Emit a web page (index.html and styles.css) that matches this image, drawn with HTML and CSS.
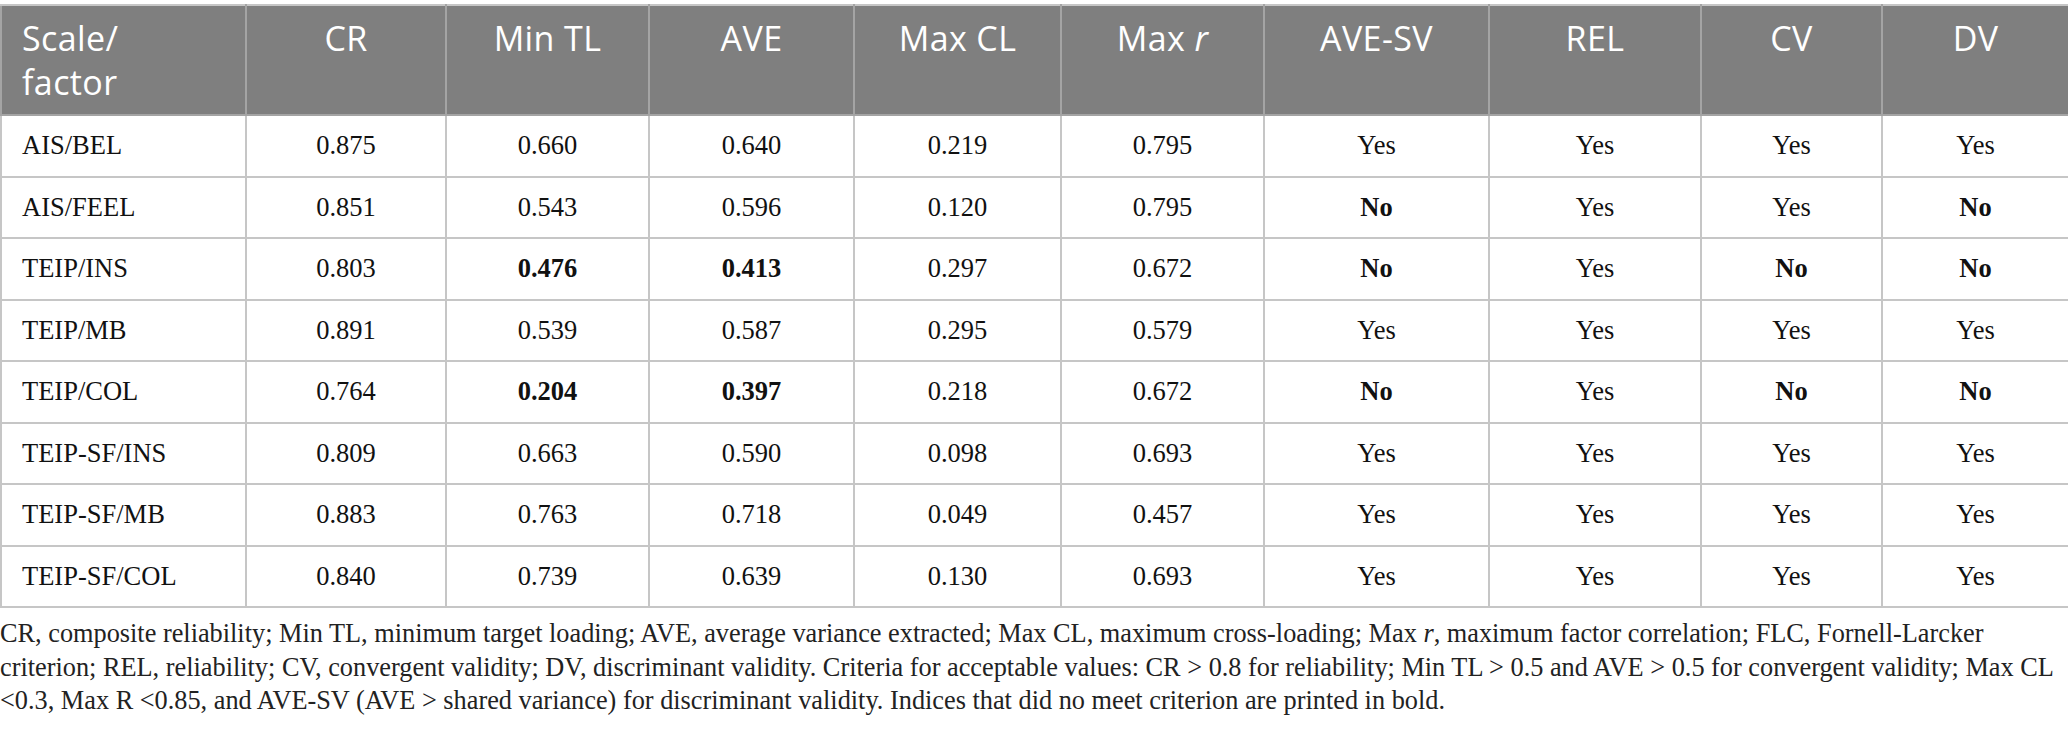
FILE: index.html
```html
<!DOCTYPE html>
<html lang="en">
<head>
<meta charset="utf-8">
<title>Validity indices</title>
<link rel="stylesheet" href="styles.css">
</head>
<body>
<div class="page">
<table class="data">
  <colgroup>
    <col class="c-scale"><col class="c-cr"><col class="c-mintl"><col class="c-ave"><col class="c-maxcl">
    <col class="c-maxr"><col class="c-avesv"><col class="c-rel"><col class="c-cv"><col class="c-dv">
  </colgroup>
  <thead>
    <tr>
      <th class="first">Scale/<br>factor</th>
      <th>CR</th>
      <th>Min TL</th>
      <th>AVE</th>
      <th>Max CL</th>
      <th>Max <i>r</i></th>
      <th>AVE-SV</th>
      <th>REL</th>
      <th>CV</th>
      <th>DV</th>
    </tr>
  </thead>
  <tbody>
    <tr><td class="first">AIS/BEL</td><td>0.875</td><td>0.660</td><td>0.640</td><td>0.219</td><td>0.795</td><td>Yes</td><td>Yes</td><td>Yes</td><td>Yes</td></tr>
    <tr><td class="first">AIS/FEEL</td><td>0.851</td><td>0.543</td><td>0.596</td><td>0.120</td><td>0.795</td><td><b>No</b></td><td>Yes</td><td>Yes</td><td><b>No</b></td></tr>
    <tr><td class="first">TEIP/INS</td><td>0.803</td><td><b>0.476</b></td><td><b>0.413</b></td><td>0.297</td><td>0.672</td><td><b>No</b></td><td>Yes</td><td><b>No</b></td><td><b>No</b></td></tr>
    <tr><td class="first">TEIP/MB</td><td>0.891</td><td>0.539</td><td>0.587</td><td>0.295</td><td>0.579</td><td>Yes</td><td>Yes</td><td>Yes</td><td>Yes</td></tr>
    <tr><td class="first">TEIP/COL</td><td>0.764</td><td><b>0.204</b></td><td><b>0.397</b></td><td>0.218</td><td>0.672</td><td><b>No</b></td><td>Yes</td><td><b>No</b></td><td><b>No</b></td></tr>
    <tr><td class="first">TEIP-SF/INS</td><td>0.809</td><td>0.663</td><td>0.590</td><td>0.098</td><td>0.693</td><td>Yes</td><td>Yes</td><td>Yes</td><td>Yes</td></tr>
    <tr><td class="first">TEIP-SF/MB</td><td>0.883</td><td>0.763</td><td>0.718</td><td>0.049</td><td>0.457</td><td>Yes</td><td>Yes</td><td>Yes</td><td>Yes</td></tr>
    <tr><td class="first">TEIP-SF/COL</td><td>0.840</td><td>0.739</td><td>0.639</td><td>0.130</td><td>0.693</td><td>Yes</td><td>Yes</td><td>Yes</td><td>Yes</td></tr>
  </tbody>
</table>
<p class="note">CR, composite reliability; Min TL, minimum target loading; AVE, average variance extracted; Max CL, maximum cross-loading; Max <i>r</i>, maximum factor correlation; FLC, Fornell-Larcker criterion; REL, reliability; CV, convergent validity; DV, discriminant validity. Criteria for acceptable values: CR &gt; 0.8 for reliability; Min TL &gt; 0.5 and AVE &gt; 0.5 for convergent validity; Max CL &lt;0.3, Max R &lt;0.85, and AVE-SV (AVE &gt; shared variance) for discriminant validity. Indices that did no meet criterion are printed in bold.</p>
</div>
</body>
</html>
```

FILE: styles.css
```css
html, body {
  margin: 0;
  padding: 0;
  background: #ffffff;
}

.page {
  padding-top: 4px;
  width: 2068px;
}

.data {
  width: 2068px;
  table-layout: fixed;
  border-collapse: collapse;
  border: 2px solid #c6c6c6;
}

.c-scale { width: 245px; }
.c-cr { width: 200px; }
.c-mintl { width: 203px; }
.c-ave { width: 205px; }
.c-maxcl { width: 207px; }
.c-maxr { width: 203px; }
.c-avesv { width: 225px; }
.c-rel { width: 212px; }
.c-cv { width: 181px; }
.c-dv { width: 187px; }

.data th {
  background: #7f7f7f;
  color: #ffffff;
  font-family: "Open Sans", "Noto Sans", sans-serif;
  font-weight: 400;
  font-size: 34px;
  line-height: 43.5px;
  letter-spacing: 0.4px;
  text-align: center;
  vertical-align: top;
  padding: 11px 10px 10px 10px;
  border: 2px solid #a4a4a4;
  border-top-color: #c6c6c6;
}

.data th i {
  font-style: italic;
}

.data td {
  font-family: "Liberation Serif", "Times New Roman", serif;
  font-size: 26.5px;
  line-height: 33.5px;
  color: #111111;
  text-align: center;
  vertical-align: middle;
  padding: 13px 10px;
  border: 2px solid #c6c6c6;
}

.data th.first,
.data td.first {
  text-align: left;
  padding-left: 20px;
}

.data td b {
  font-weight: 700;
}

.note {
  margin: 9px 0 0 0;
  font-family: "Liberation Serif", "Times New Roman", serif;
  font-size: 26.3px;
  line-height: 33.5px;
  color: #222222;
}
```
